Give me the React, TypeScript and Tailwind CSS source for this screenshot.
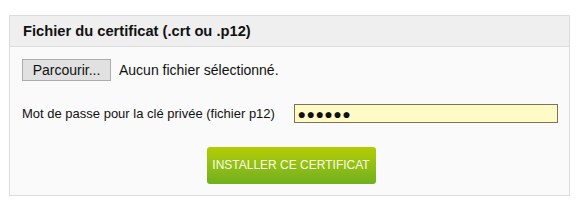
export default function App() {
  return (
    <div className="min-h-[203px] bg-white pl-[9px] pt-[15px]" style={{ fontFamily: "'Liberation Sans', Arial, sans-serif" }}>
      <div className="w-[561px] border border-[#dcdcdc]">
        {/* header */}
        <div className="flex h-[31px] items-center border-b border-[#dcdcdc] bg-[#efefef] px-[13px]">
          <span className="text-[14.7px] font-bold text-[#111]">Fichier du certificat (.crt ou .p12)</span>
        </div>

        <div className="bg-[#fafafa] pb-[11px] pl-[12px] pr-[11px] pt-[12px]">
          {/* file picker */}
          <div className="flex items-center gap-[8px]">
            <button
              type="button"
              className="h-[22px] w-[89px] border border-[#acacac] bg-[#e1e1e1] text-[14px] text-[#111]"
            >
              Parcourir...
            </button>
            <span className="text-[14px] text-[#111]">Aucun fichier sélectionné.</span>
          </div>

          {/* password */}
          <div className="mt-[23px] flex items-center">
            <label className="w-[273px] text-[13px] text-[#111]">Mot de passe pour la clé privée (fichier p12)</label>
            <div className="flex h-[19px] w-[264px] items-center border border-[#7d7350] bg-[#fffac6] pl-[2px]">
              <span className="text-[14px] leading-none tracking-[0.5px] text-[#111]">●●●●●●</span>
            </div>
          </div>

          {/* submit */}
          <div className="mt-[23px] flex justify-center pl-[2px]">
            <button
              type="button"
              className="h-[37px] w-[169px] rounded-[3px] bg-gradient-to-b from-[#b4cc00] to-[#6fb01e] text-[12px] text-[#f8ffe8]"
            >
              INSTALLER CE CERTIFICAT
            </button>
          </div>
        </div>
      </div>
    </div>
  )
}
